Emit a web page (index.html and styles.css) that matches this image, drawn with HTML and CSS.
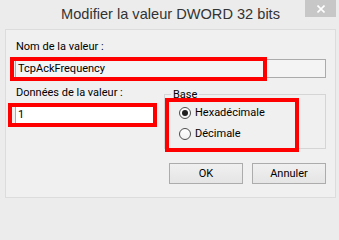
FILE: index.html
```html
<!DOCTYPE html>
<html lang="fr">
<head>
<meta charset="utf-8">
<title>Modifier la valeur DWORD 32 bits</title>
<link rel="stylesheet" href="styles.css">
</head>
<body>
<div class="window">
  <div class="titlebar">
    <span class="title">Modifier la valeur DWORD 32 bits</span>
    <span class="close"><svg width="8" height="8" viewBox="0 0 8 8"><path d="M0.5 0.5 L7.5 7.5 M7.5 0.5 L0.5 7.5" stroke="#fff" stroke-width="1.6" fill="none"/></svg></span>
  </div>
  <div class="panel">
    <div class="label">Nom de la valeur :</div>
    <div class="field field-ro">TcpAckFrequency</div>
    <div class="row">
      <div class="col-data">
        <div class="label">Données de la valeur :</div>
        <div class="field field-edit">1</div>
      </div>
      <fieldset class="base">
        <legend>Base</legend>
        <div class="radio-row"><span class="radio checked"></span>Hexadécimale</div>
        <div class="radio-row"><span class="radio"></span>Décimale</div>
      </fieldset>
    </div>
    <div class="buttons">
      <span class="btn">OK</span>
      <span class="btn">Annuler</span>
    </div>
  </div>
  <span class="mark mark-name"></span>
  <span class="mark mark-data"></span>
  <span class="mark mark-base"></span>
</div>
</body>
</html>
```
FILE: styles.css
```css
html, body {
  margin: 0;
  padding: 0;
}
body {
  width: 339px;
  height: 202px;
  overflow: hidden;
  background: #ececec;
  font-family: Roboto, "Liberation Sans", sans-serif;
  font-size: 11px;
  color: #000;
}
.window {
  position: relative;
  width: 339px;
  height: 202px;
  display: flex;
  flex-direction: column;
  background: #ececec;
}
.titlebar {
  height: 29px;
  box-sizing: border-box;
  padding-top: 6px;
  text-align: center;
}
.title {
  font-family: "Liberation Sans", Arial, sans-serif;
  font-size: 14.6px;
  line-height: 17px;
  color: #333;
  padding-left: 2px;
}
.close {
  position: absolute;
  top: 0;
  right: 3px;
  width: 31px;
  height: 17px;
  background: #c7c7c7;
  display: flex;
  align-items: center;
  justify-content: center;
}
.close svg {
  display: block;
}
.panel {
  margin: 0 3px 0 5px;
  height: 169px;
  box-sizing: border-box;
  border: 1px solid #dcdcdc;
  background: #f0f0f0;
  padding: 9px 9px 0 9px;
  display: flex;
  flex-direction: column;
}
.label {
  line-height: 15px;
  height: 15px;
  padding-left: 1px;
}
.field {
  margin-top: 5px;
  height: 19px;
  box-sizing: border-box;
  border: 1px solid #ababab;
  line-height: 17px;
  padding-left: 2px;
}
.field-ro {
  background: #f4f4f4;
}
.field-edit {
  background: #fff;
}
.row {
  margin-top: 7px;
  display: flex;
  gap: 10px;
}
.col-data {
  width: 139px;
  display: flex;
  flex-direction: column;
}
.base {
  flex: 1;
  margin: 2px 0 0 0;
  padding: 0 6px 4px 6px;
  min-width: 0;
  border: 1px solid #d5d5d5;
}
.base legend {
  padding: 0 2px;
  line-height: 15px;
  height: 15px;
}
.radio-row {
  height: 21px;
  display: flex;
  align-items: center;
  padding-left: 8px;
}
.radio {
  width: 12px;
  height: 12px;
  box-sizing: border-box;
  border-radius: 50%;
  border: 1px solid #4d4d4d;
  background: linear-gradient(#ffffff, #f2f2f2);
  margin-right: 4px;
  display: flex;
  align-items: center;
  justify-content: center;
}
.radio.checked::after {
  content: "";
  width: 6px;
  height: 6px;
  border-radius: 50%;
  background: #1e1e1e;
}
.buttons {
  margin-top: 14px;
  display: flex;
  justify-content: flex-end;
  gap: 9px;
}
.btn {
  width: 74px;
  height: 21px;
  box-sizing: border-box;
  border: 1px solid #acacac;
  background: linear-gradient(#f0f0f0, #e5e5e5);
  display: flex;
  align-items: center;
  justify-content: center;
  line-height: 19px;
}
.mark {
  position: absolute;
  box-sizing: border-box;
  border: 4px solid #ff0000;
}
.mark-name {
  left: 10px;
  top: 57px;
  width: 257px;
  height: 24px;
}
.mark-data {
  left: 8px;
  top: 103px;
  width: 149px;
  height: 24px;
}
.mark-base {
  left: 165px;
  top: 98px;
  width: 134px;
  height: 54px;
}
```
